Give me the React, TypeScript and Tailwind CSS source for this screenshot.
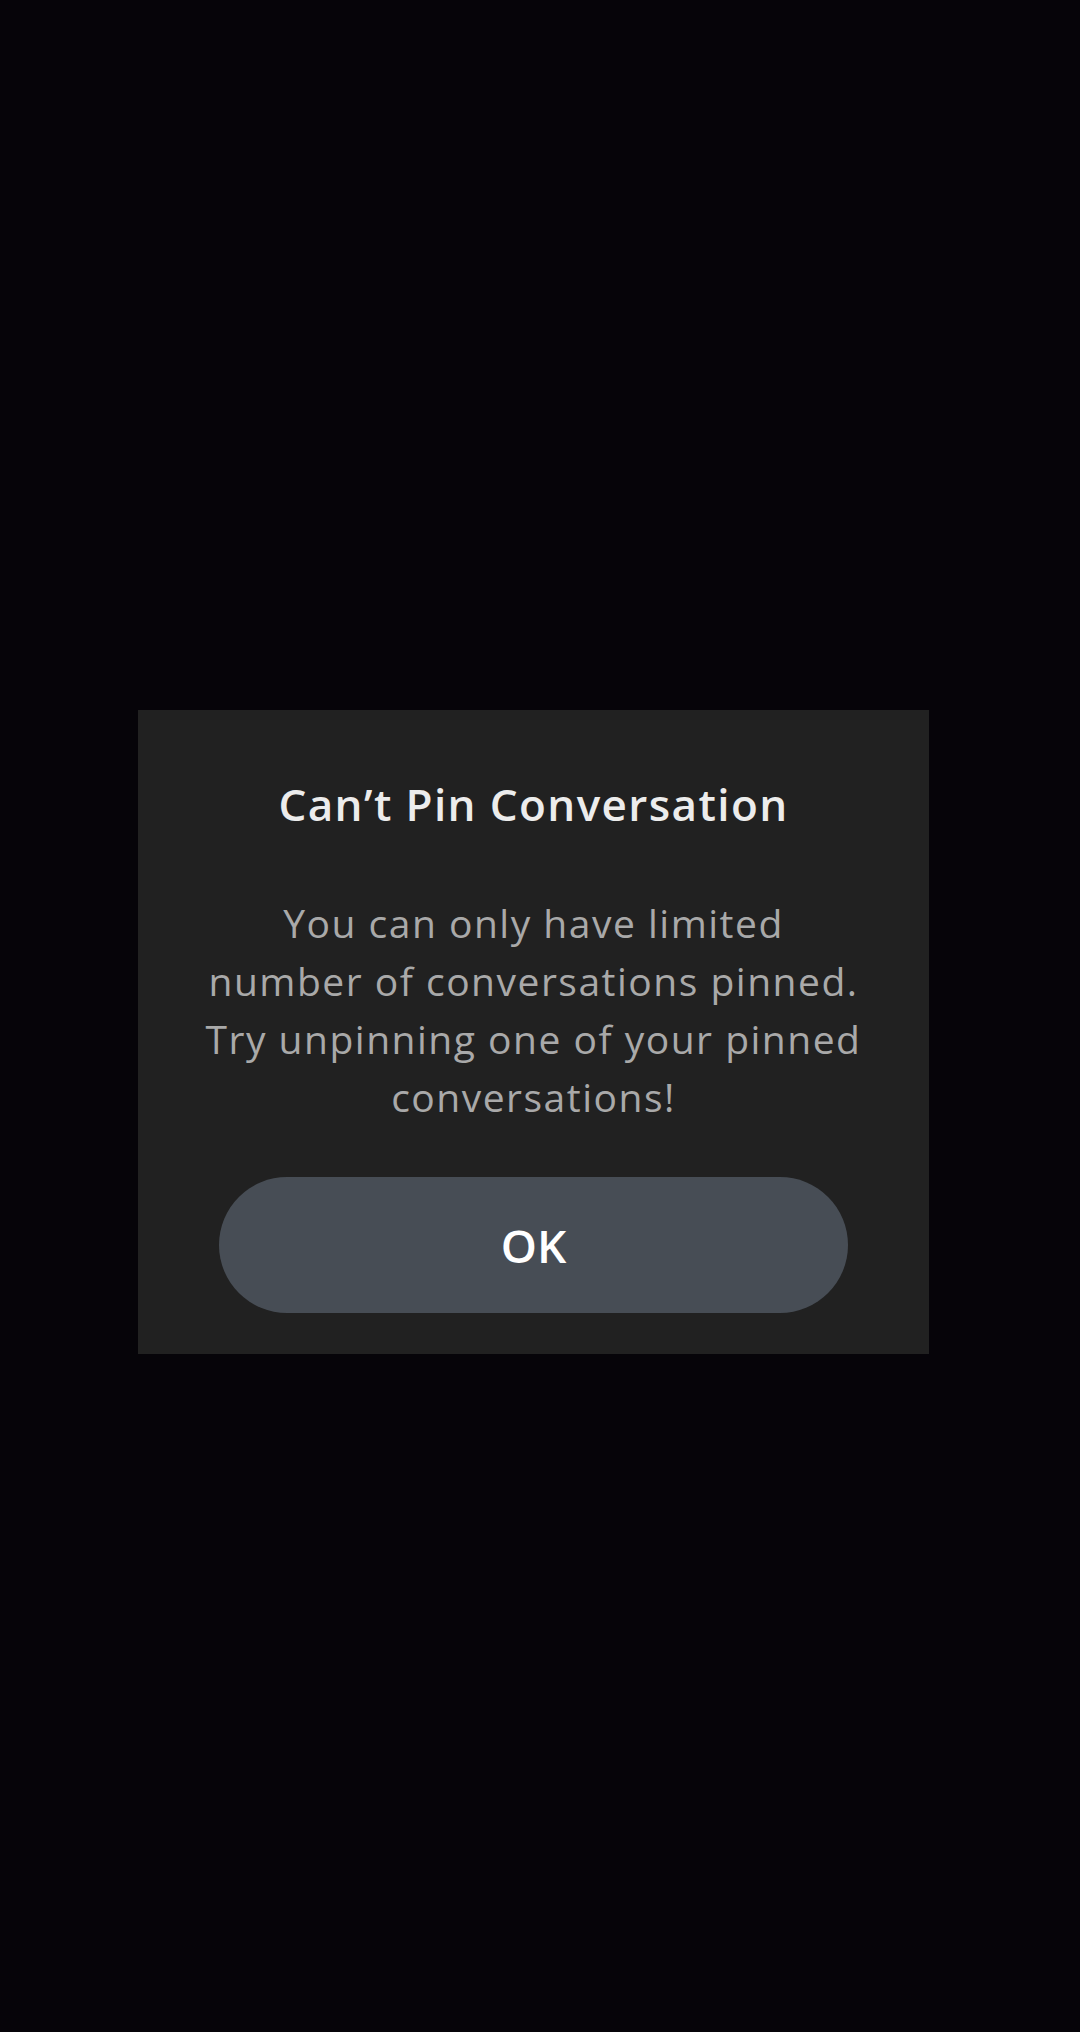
export default function App() {
  return (
    <div
      className="w-[1080px] h-[2032px] bg-[#060409] pt-[710px] pl-[138px]"
      style={{ fontFamily: "'Open Sans', Lato, sans-serif" }}
    >
      <div className="w-[791px] h-[644px] bg-[#212121] flex flex-col items-center pt-[66px]">
        <h1 className="text-[44px] leading-[56px] font-semibold tracking-[1.4px] text-[#ececec] text-center">
          Can’t Pin Conversation
        </h1>
        <p className="mt-[62px] text-[39px] leading-[58px] tracking-[1.5px] text-[#a9a9a9] text-center">
          You can only have limited
          <br />
          number of conversations pinned.
          <br />
          Try unpinning one of your pinned
          <br />
          conversations!
        </p>
        <button className="mt-[51px] w-[629px] h-[136px] rounded-full bg-[#474d55] text-white text-[46px] font-semibold flex items-center justify-center">
          OK
        </button>
      </div>
    </div>
  );
}
